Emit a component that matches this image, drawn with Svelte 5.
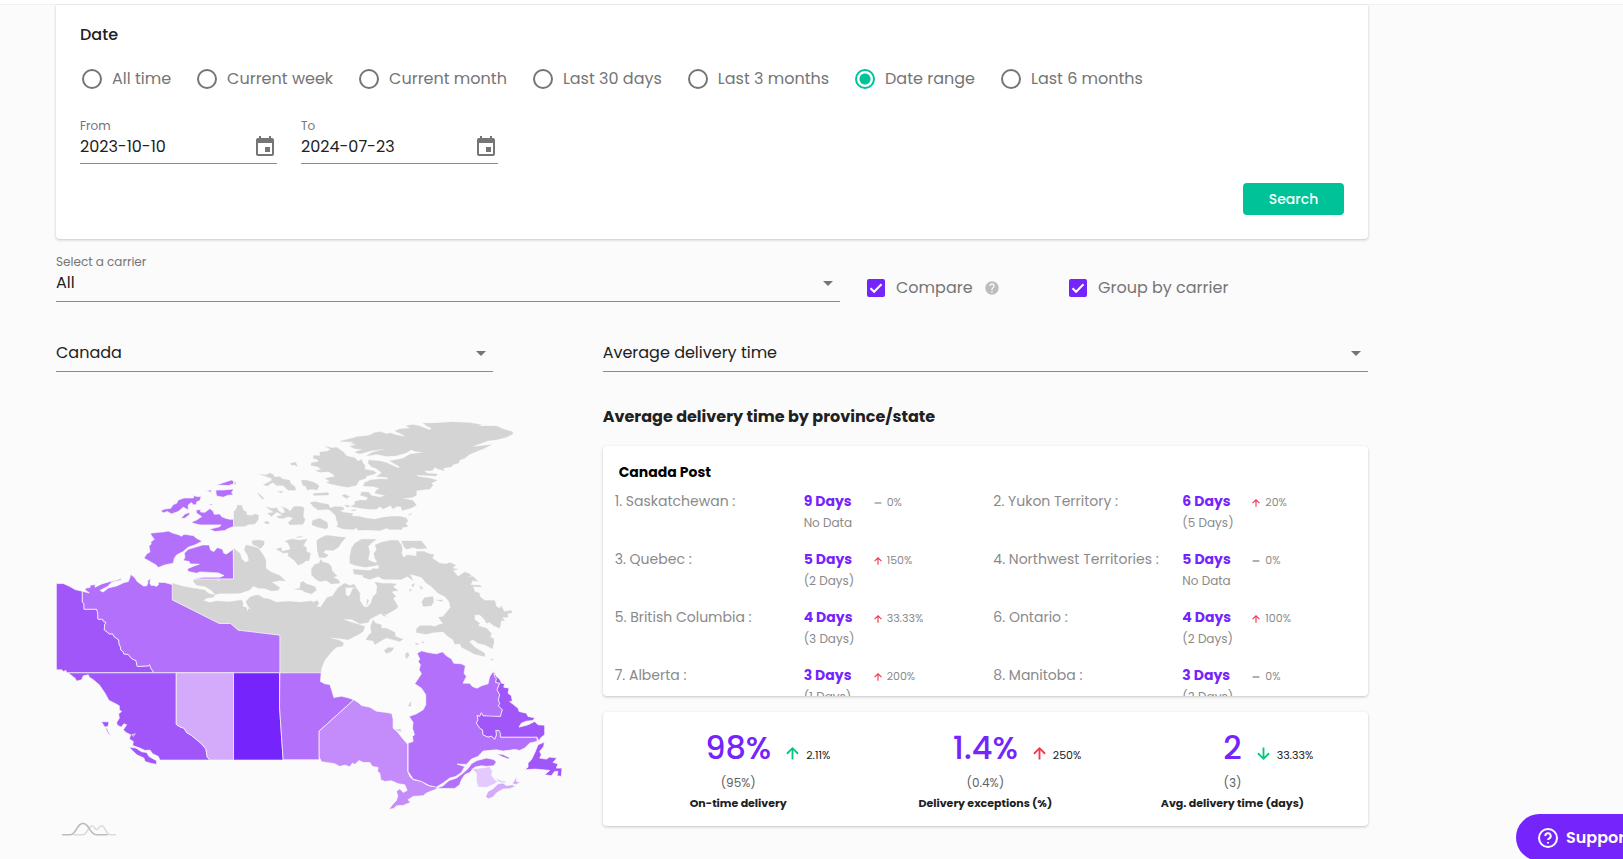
<script>
  const ranges = ['All time', 'Current week', 'Current month', 'Last 30 days', 'Last 3 months', 'Date range', 'Last 6 months'];
  let range = $state('Date range');
  let from = $state('2023-10-10');
  let to = $state('2024-07-23');
  let compare = $state(true);
  let grouped = $state(true);

  const dates = [
    { id: 'from', label: 'From' },
    { id: 'to', label: 'To' }
  ];

  const provinces = [
    ['1. Saskatchewan :', '9 Days', 'No Data', 'flat', '0%'],
    ['2. Yukon Territory :', '6 Days', '(5 Days)', 'up', '20%'],
    ['3. Quebec :', '5 Days', '(2 Days)', 'up', '150%'],
    ['4. Northwest Territories :', '5 Days', 'No Data', 'flat', '0%'],
    ['5. British Columbia :', '4 Days', '(3 Days)', 'up', '33.33%'],
    ['6. Ontario :', '4 Days', '(2 Days)', 'up', '100%'],
    ['7. Alberta :', '3 Days', '(1 Days)', 'up', '200%'],
    ['8. Manitoba :', '3 Days', '(3 Days)', 'flat', '0%']
  ];

  const totals = [
    { value: '98%', prev: '(95%)', label: 'On-time delivery', change: '2.11%', dir: 'up', tone: 'good' },
    { value: '1.4%', prev: '(0.4%)', label: 'Delivery exceptions (%)', change: '250%', dir: 'up', tone: 'bad' },
    { value: '2', prev: '(3)', label: 'Avg. delivery time (days)', change: '33.33%', dir: 'down', tone: 'good' }
  ];
</script>

{#snippet arrow(dir)}
  <svg class="arrow" viewBox="0 0 14 14" aria-hidden="true">
    {#if dir === 'flat'}
      <path d="M1 7h12" />
    {:else if dir === 'up'}
      <path d="M7 13.5V1.5M1 7.3 7 1.3l6 6" />
    {:else}
      <path d="M7 .5v12M1 6.7l6 6 6-6" />
    {/if}
  </svg>
{/snippet}

<div class="topbar"></div>
<main>
  <section class="card filter">
    <h2>Date</h2>
    <div class="radios">
      {#each ranges as r}
        <label class="radio"><input type="radio" name="range" value={r} bind:group={range} />{r}</label>
      {/each}
    </div>
    <div class="dates">
      {#each dates as d}
        <div class="field">
          <label for={d.id}>{d.label}</label>
          <div class="line">
            {#if d.id === 'from'}
              <input id="from" type="text" bind:value={from} />
            {:else}
              <input id="to" type="text" bind:value={to} />
            {/if}
            <button class="cal" type="button" aria-label="Open calendar">
              <svg viewBox="0 0 24 24"><path d="M17 12h-5v5h5v-5zM16 1v2H8V1H6v2H5c-1.11 0-1.99.9-1.99 2L3 19c0 1.1.89 2 2 2h14c1.1 0 2-.9 2-2V5c0-1.1-.9-2-2-2h-1V1h-2zm3 18H5V8h14v11z" /></svg>
            </button>
          </div>
        </div>
      {/each}
    </div>
    <div class="actions"><button class="search" type="button">Search</button></div>
  </section>

  <section class="carrier">
    <div class="field">
      <label for="carrier">Select a carrier</label>
      <div class="pick"><select id="carrier"><option>All</option></select></div>
    </div>
    <div class="check">
      <label><input type="checkbox" bind:checked={compare} />Compare</label>
      <svg class="help" viewBox="0 0 24 24" aria-hidden="true"><path d="M12 2C6.48 2 2 6.48 2 12s4.480 10 10 10 10-4.480 10-10S17.520 2 12 2zm1 17h-2v-2h2v2zm2.070-7.750l-.9.920C13.450 12.900 13 13.500 13 15h-2v-.5c0-1.100.450-2.100 1.170-2.830l1.240-1.260c.370-.360.590-.860.590-1.410 0-1.100-.9-2-2-2s-2 .9-2 2H8c0-2.210 1.790-4 4-4s4 1.790 4 4c0 .880-.360 1.680-.930 2.250z" /></svg>
    </div>
    <div class="check">
      <label><input type="checkbox" bind:checked={grouped} />Group by carrier</label>
    </div>
  </section>

  <div class="columns">
    <section>
      <div class="pick country"><select aria-label="Country"><option>Canada</option></select></div>
      <svg class="map" viewBox="18 0 1641 1290" role="img" aria-label="Canada">
        <g class="empty">
          <path d="M367 520 395 528 430 535 465 540 475 550 495 555 490 562 470 565 460 572 480 578 500 573 540 576 575 570 580 580 578 590 590 593 592 606 595 597 602 600 592 585 588 575 600 562 612 557 625 555 640 564 660 568 680 577 715 574 750 577 785 573 790 577 802 572 808 580 800 589 812 592 832 562 848 558 860 540 865 533 885 520 900 527 912 523 920 533 887 533 888 555 898 560 910 535 920 535 930 550 930 572 942 590 955 594 970 605 985 590 1000 608 975 620 960 628 955 638 930 642 905 628 878 628 900 636 925 643 945 650 940 665 930 672 918 678 895 690 870 686 835 683 870 692 882 700 878 709 860 712 845 726 824 752 814 778 814 789 690 789 690 676 565 661 542 641 508 641 367 570Z" />
          <path d="M552 415 562 424 570 430 576 448 588 458 597 452 593 435 583 420 588 405 610 410 626 415 640 435 648 450 648 475 665 487 690 497 707 513 690 512 665 517 690 533 685 541 665 543 645 536 625 535 610 528 600 540 570 550 540 551 512 551 495 554 487 543 465 530 440 526 430 515 432 508 552 508ZM606 393 625 390 643 393 643 404 632 416 622 410 608 403ZM552 305 560 296 562 286 575 286 580 300 590 306 590 315 607 317 613 312 626 315 625 330 615 342 595 344 585 349 552 350ZM552 215 560 219 554 225Z" />
          <g transform="translate(570 0)">
            <path d="M300 94 340 84 352 80 375 78 392 75 403 68 420 65 440 71 452 69 470 75 497 80 485 72 465 63 480 57 512 54 498 47 520 44 540 48 556 55 570 60 575 55 562 48 550 40 590 39 635 36 690 38 725 44 715 48 770 48 790 57 818 65 820 71 800 82 770 89 745 92 695 110 720 108 755 104 735 115 715 122 690 133 675 145 660 150 657 159 640 164 635 170 610 175 614 182 595 177 585 172 577 182 553 182 562 190 592 192 590 198 530 195 535 200 570 205 592 211 575 220 580 226 570 237 530 242 530 256 517 263 487 265 520 272 530 286 515 294 487 302 483 290 470 290 460 297 452 287 430 297 420 290 410 298 390 298 360 294 333 290 345 283 345 275 362 270 378 272 385 263 362 256 365 246 387 247 395 257 420 262 437 257 405 250 410 240 420 235 400 230 370 228 375 218 392 210 420 207 447 208 440 202 410 200 426 188 408 175 395 170 385 160 387 150 420 153 440 158 475 174 480 170 450 153 470 149 490 145 510 133 552 127 525 124 515 119 500 128 470 137 440 139 410 133 380 138 395 128 415 122 440 116 415 119 390 123 360 132 345 126 370 118 345 116 330 108 350 104 333 100 345 96Z" />
            <path d="M256 109 278 114 290 112 310 125 320 138 345 143 355 154 365 148 370 160 375 165 375 178 400 182 410 188 400 194 380 198 378 205 358 212 350 226 325 232 300 228 272 222 260 218 270 214 256 205 285 200 280 193 265 185 240 187 228 182 245 178 233 170 213 166 215 158 235 155 235 149 220 145 222 136 240 138 240 126 262 124 272 118Z" />
            <path d="M211 278 225 275 250 281 265 283 272 294 285 290 310 291 312 300 300 300 310 307 340 311 335 318 360 320 380 325 405 328 430 322 450 320 480 319 500 324 505 334 497 340 505 350 487 353 487 359 450 359 440 355 420 362 380 360 355 361 350 354 340 359 310 357 290 350 295 342 290 330 288 318 275 305 265 298 235 300 220 290ZM216 345 218 332 240 325 262 337 265 352 258 357 235 352ZM78 291 97 296 110 293 115 302 125 310 135 308 132 297 125 290 145 298 150 305 162 290 185 290 193 294 190 320 196 328 190 343 150 345 145 338 160 325 145 320 130 326 118 325 110 320 128 315 110 306 95 320 83 310 102 307ZM60 193 78 195 90 189 100 194 105 202 120 200 128 207 150 211 152 220 165 230 168 241 145 241 130 227 110 227 100 218 90 222 85 228 70 225 95 212 95 205ZM185 210 200 211 215 215 232 222 238 229 232 240 215 238 202 240 198 230 188 225ZM220 251 265 248 267 255 222 257ZM152 160 168 157 173 170 165 165 155 165ZM52 249 62 255 74 268 65 266ZM306 257 315 253 329 260 320 266ZM113 245 130 244 125 249ZM72 338 80 333 89 338 84 343ZM506 315 516 309 512 315ZM314 285 330 287 325 293ZM333 300 350 299 342 303Z" />
            <path d="M109 417 125 413 125 425 152 418 145 400 135 394 155 387 180 391 202 387 195 399 190 406 200 413 200 425 212 430 208 452 197 453 190 460 175 466 162 450 145 438 145 428 130 430ZM168 382 190 378 180 383ZM231 392 240 385 260 376 290 380 318 383 308 394 295 413 280 422 258 420 250 428 265 435 258 443 238 443 232 420ZM215 476 225 463 238 460 242 448 250 457 265 460 275 470 277 483 292 498 280 502 297 510 300 520 275 522 260 512 240 515 228 508 215 495ZM164 538 180 535 182 518 190 514 200 522 225 530 230 540 215 552 195 546 185 540ZM330 440 335 415 345 400 365 388 410 388 395 399 385 410 390 425 385 450 402 457 410 467 375 472 345 466 330 460Z" />
            <path d="M406 405 425 397 455 391 475 392 485 405 488 418 485 430 492 443 502 435 530 438 530 425 553 425 570 432 583 434 578 445 600 460 620 462 630 458 648 465 638 475 655 478 640 482 655 500 675 486 690 492 695 498 680 502 700 500 715 515 698 512 693 525 720 526 726 531 700 530 705 545 720 550 720 560 735 572 765 572 770 590 780 595 785 588 793 605 815 602 817 608 803 612 805 622 787 622 795 633 785 632 780 655 760 647 750 637 740 640 735 630 720 615 705 615 705 630 720 640 715 648 740 655 755 670 752 683 762 686 763 698 758 717 735 705 715 700 700 690 688 694 705 712 735 730 735 740 705 733 680 720 665 712 660 702 645 703 640 690 625 680 610 666 580 668 560 673 530 668 530 657 540 648 570 647 585 650 600 643 610 642 596 622 610 620 632 593 628 575 615 560 595 550 575 530 560 520 545 502 510 492 520 512 502 500 485 509 430 508 415 500 390 509 370 502 370 496 342 492 340 478 368 480 390 482 400 476 415 477 418 468 402 460 412 455 405 445 402 430 410 420ZM485 393 545 393 562 415 535 417 520 413 500 418 492 410Z" />
            <path d="M405 516 430 521 450 520 470 522 460 531 475 542 455 545 468 560 460 565 475 590 470 597 440 614 425 610 400 605 382 612 370 604 392 582 400 560 410 550 412 530ZM382 567 387 572 380 588ZM383 613 400 618 390 622ZM418 600 440 620 430 618ZM400 630 408 640 425 645 425 655 440 655 465 667 468 680 490 688 480 695 460 690 440 684 420 695 405 705 400 693 378 690 385 678 395 668 392 650ZM546 575 555 563 580 560 582 575 575 588 550 590ZM590 570 610 570 605 575ZM433 722 445 713 463 714 455 725 440 731ZM497 732 503 727 509 735 502 746 497 742ZM525 700 538 701 532 706ZM545 697 554 694 550 700ZM515 525 525 520 520 532ZM540 527 550 535 543 538ZM508 540 516 538 512 545ZM752 748 762 748 758 752Z" />
          </g>
          <path d="M1075 888 1084 875 1083 890ZM1035 960 1052 958 1054 966Z" />
        </g>
        <g transform="translate(0 480)">
          <path class="s4" d="M19 41 40 41 60 50 75 59 97 64 97 96 102 102 102 118 140 118 143 128 144 148 158 148 160 154 168 157 164 165 163 180 178 192 188 192 192 200 206 210 208 225 212 232 212 240 220 246 221 252 235 254 246 267 258 272 262 290 295 288 299 284 302 294 312 309 50 309 48 302 40 305 35 300 19 300Z" />
          <path class="s3" d="M97 64 118 69 105 60 108 54 120 53 120 46 136 44 135 52 155 42 180 35 200 31 215 25 212 31 185 37 173 50 150 62 160 66 175 54 200 48 222 38 235 35 240 22 242 13 255 24 262 35 280 48 290 48 294 38 292 34 302 25 300 40 304 47 312 46 318 50 325 45 325 37 345 38 367 44 367 90 508 161 542 161 565 181 690 196 690 309 312 309 302 294 299 284 295 288 262 290 258 272 246 267 235 254 221 252 220 246 212 240 212 232 208 225 206 210 192 200 188 192 178 192 163 180 164 165 168 157 160 154 158 148 144 148 143 128 140 118 102 118 102 102 97 96Z" />
          <path class="s4" d="M54 309 379 309 379 464 392 472 402 475 410 488 425 497 438 508 455 522 468 538 472 562 480 571 330 571 325 560 308 552 300 541 285 542 270 535 248 527 250 515 238 508 242 495 228 488 220 480 230 465 222 462 214 472 202 466 200 458 208 445 206 432 215 425 208 420 208 408 190 398 177 392 165 370 148 345 130 330 118 322 115 315 100 318 95 330 80 334 75 325ZM237 532 258 535 275 546 290 548 297 560 320 573 320 584 300 580 285 575 282 565 262 556 250 545ZM154 456 177 456 174 470 165 472ZM165 473 172 478 176 488 186 499 175 492ZM245 495 256 492 250 500Z" />
          <path class="s1" d="M379 309H551V571H480L472 562 468 538 455 522 438 508 425 497 410 488 402 475 392 472 379 464Z" />
          <path class="s5" d="M551 309H689V410L695 500 700 571H551Z" />
        </g>
        <path class="s3" d="M301 370 325 367 340 366 355 363 370 370 385 374 395 379 402 373 430 377 440 385 457 394 435 405 415 412 400 425 380 435 373 446 370 460 345 465 325 473 318 465 300 455 282 445 290 432 300 426 297 408 304 402 302 397 313 388 305 378ZM403 430 415 418 435 412 458 405 478 405 482 420 492 425 502 413 518 418 522 430 530 432 550 418 551 507 430 507 460 502 510 502 522 497 505 489 450 486 440 490 415 485 412 477 432 468 448 463 420 462 418 455 400 452 405 442ZM424 337 440 330 455 320 440 310 438 300 453 299 452 306 465 307 480 296 490 304 493 313 510 312 515 320 527 325 540 328 551 328 551 350 535 356 525 362 495 365 478 358 510 350 513 345 485 345 450 345 430 340ZM333 302 345 297 362 295 370 284 380 280 385 270 402 264 430 264 432 257 442 260 454 260 450 272 440 276 440 284 430 285 425 278 415 285 415 300 400 292 385 305 365 312 352 305 340 309ZM393 325 405 312 420 307 418 315 405 325ZM498 240 520 240 552 237 545 248 550 255 535 256 520 262 500 258 498 248ZM500 225 530 215 545 210 551 213 551 222 535 227ZM468 242 486 240 482 247ZM474 283 490 282 485 286ZM503 508 508 508 506 514Z" />
        <g transform="translate(660 570)">
          <path class="s3" d="M30 219H154L152 245 165 252 180 254 187 275 192 293 215 289 235 294 252 300 148 394V480H40L35 410 29 320Z" />
          <path class="s2" d="M252 300 265 308 275 317 300 322 320 334 350 338 366 341 370 358 370 385 385 398 395 412 414 434V515L420 530 430 540 455 545 470 555 485 560 505 556 500 568 470 580 460 588 430 590 415 600 422 608 400 617 380 618 372 626 357 629 368 615 380 602 384 588 380 575 390 567 400 578 412 572 405 555 385 552 365 543 345 545 333 540 330 520 323 515 325 503 308 500 300 488 280 488 268 482 255 494 248 490 240 501 225 496 210 500 195 492 170 488 155 486 148 472V394Z" />
          <path class="s3" d="M442 160 455 153 475 158 500 162 518 156 530 168 545 177 552 190 575 192 587 198 583 220 590 230 580 250 600 250 608 260 622 265 635 258 655 252 660 230 672 213 675 230 680 236 678 248 690 250 682 270 690 285 686 300 690 312 686 318 698 330 692 350 660 350 640 348 635 339 630 350 622 347 625 360 620 370 630 385 638 390 640 405 655 412 665 409 675 418 680 405 678 392 692 393 692 412 802 412V425L780 430 765 445 750 452 735 449 700 454 680 450 640 454 625 470 605 478 590 494 562 493 585 500 575 518 558 530 540 535 520 550 500 562 480 558 455 545 430 538 415 515V430L430 425 428 410 434 405 428 385 430 368 418 350 440 342 460 330 468 315 468 285 455 265 435 252 445 237 455 222 448 210 452 195 445 185 450 178Z" />
          <path class="s3" d="M500 566 520 558 538 542 560 535 580 520 595 506 605 492 622 482 650 475 672 479 680 487 672 498 650 500 635 498 615 502 600 518 585 525 575 540 570 555 555 566ZM680 462 700 464 722 475 715 478 695 470Z" />
          <path class="s4" d="M672 213 680 230 690 238 695 250 705 252 702 262 718 265 715 280 725 288 728 305 720 305 732 315 745 325 748 335 770 340 775 350 795 354 790 362 770 364 755 370 748 382 775 375 795 365 805 375 825 376 825 405 812 415 808 425 802 412 692 412 692 400 688 392 678 392 680 405 675 418 665 409 655 412 640 405 638 390 630 385 620 370 625 360 622 347 630 350 635 339 640 348 692 350 698 330 686 318 690 312 686 300 690 285 682 270 690 250 678 248 680 236 675 230ZM765 510 775 502 775 490 785 480 795 460 805 435 824 427 822 440 810 455 815 465 810 475 830 478 840 472 862 475 850 488 865 492 860 505 877 505 875 530 862 528 865 515 855 515 845 528 825 525 840 512 820 510 795 508Z" />
          <path class="s0" d="M606 508 640 504 660 500 668 515 665 525 675 540 685 545 670 555 650 563 625 562 620 545 620 520ZM675 535 695 542 712 545 705 550 690 548Z" />
          <path class="s1" d="M648 590 655 575 670 567 685 552 700 550 710 557 728 555 738 560 720 567 700 568 680 580 670 592 655 598ZM728 552 735 540 742 530 740 545 752 545 740 555Z" />
        </g>
        <g class="waves" transform="translate(0 480)">
          <path class="pale" d="M70 795H98C112 795 114 768 127 768 134 768 134 780 140 780 146 780 146 768 154 768 166 768 168 795 180 795H198" />
          <path d="M36 795H62C78 795 80 761 99 761 118 761 120 795 138 795H173" />
        </g>
      </svg>
    </section>

    <section>
      <div class="pick"><select aria-label="Metric"><option>Average delivery time</option></select></div>
      <h1>Average delivery time by province/state</h1>
      <div class="card list">
        <h3>Canada Post</h3>
        <div class="provinces">
          {#each provinces as [name, days, prev, dir, pct]}
            <div class="province">
              <span class="name">{name}</span>
              <div class="days"><strong>{days}</strong><small>{prev}</small></div>
              <span class="change {dir}">{@render arrow(dir)}{pct}</span>
            </div>
          {/each}
        </div>
      </div>
      <div class="card totals">
        {#each totals as t}
          <div class="total">
            <div class="figure">
              <b>{t.value}</b>
              <span class="delta {t.tone}">{@render arrow(t.dir)}{t.change}</span>
            </div>
            <span class="prev">{t.prev}</span>
            <span class="caption">{t.label}</span>
          </div>
        {/each}
      </div>
    </section>
  </div>
</main>
<button class="support" type="button">
  <svg viewBox="0 0 20 20" aria-hidden="true"><circle cx="10" cy="10" r="9" /><path d="M7.300 8a2.700 2.700 0 1 1 4 2.300C10.300 10.900 10 11.200 10 12" /><path d="M10 14v1.600" /></svg>
  Support
</button>

<style>
  :global(body) {
    background: #fbfbfb;
    color: #212121;
    font-family: Poppins, Inter, sans-serif;
    font-size: 16px;
    line-height: 24px;
    overflow: hidden;
  }
  main, main * { box-sizing: border-box; }
  input, select, button { font: inherit; color: inherit; }
  h1, h2, h3 { margin: 0; }
  .topbar { height: 4px; background: #fff; border-bottom: 1px solid #f0f0f0; }
  main { max-width: 1312px; margin-left: 56px; }
  .card { background: #fff; border-radius: 4px; box-shadow: 0 1px 3px rgba(0, 0, 0, .22); }
  .filter { padding: 18px 24px 24px; border-radius: 0 0 4px 4px; }
  h2 { font-size: 16px; font-weight: 500; }
  .radios { display: flex; gap: 24px; margin-top: 20px; color: #757575; }
  .radio { display: flex; align-items: center; gap: 10px; padding-left: 2px; white-space: nowrap; }
  .radio input {
    appearance: none; width: 20px; height: 20px; margin: 0;
    border: 2px solid #757575; border-radius: 50%;
  }
  .radio input:checked { border-color: #00c298; background: radial-gradient(circle, #00c298 5px, #fff 6px); }
  .dates { display: flex; gap: 24px; margin-top: 26px; }
  .dates .field { width: 197px; }
  .field label { display: block; font-size: 12px; line-height: 18px; color: #757575; }
  .line { display: flex; align-items: center; height: 29px; border-bottom: 1px solid #8a8a8a; }
  .line input { flex: 1; min-width: 0; border: 0; padding: 0; height: 24px; margin-bottom: 4px; background: none; outline: 0; }
  .cal { width: 24px; height: 24px; padding: 0; border: 0; margin-bottom: 4px; background: none; }
  .cal svg { display: block; fill: #757575; }
  .actions { display: flex; justify-content: flex-end; margin-top: 19px; }
  .search { width: 101px; height: 32px; padding: 0; border: 0; border-radius: 4px; background: #00c298; color: #fff; font-size: 14px; font-weight: 500; }
  .carrier { display: grid; grid-template-columns: 784px 175px auto; column-gap: 27px; margin-top: 14px; align-items: end; }
  .pick { position: relative; height: 31px; border-bottom: 1px solid #8a8a8a; }
  .pick::after {
    content: ''; position: absolute; right: 7px; top: 10px;
    border: 5px solid transparent; border-top-color: #757575; border-bottom: 0;
  }
  select { appearance: none; width: 100%; height: 24px; border: 0; padding: 0; background: none; outline: 0; display: block; }
  .check { display: flex; align-items: center; gap: 11px; height: 24px; margin-bottom: 2px; color: #757575; }
  .check label { display: flex; align-items: center; gap: 11px; white-space: nowrap; }
  .check input {
    appearance: none; width: 18px; height: 18px; margin: 0; border-radius: 2px; border: 2px solid #757575;
  }
  .check input:checked {
    border: 0;
    background: #7524fb url("data:image/svg+xml,%3Csvg xmlns='http://www.w3.org/2000/svg' viewBox='0 0 18 18'%3E%3Cpath d='M3.500 9.200l3.600 3.600 7.400-7.600' fill='none' stroke='white' stroke-width='2'/%3E%3C/svg%3E");
  }
  .help { width: 16px; height: 16px; fill: #bdbdbd; }
  .columns { display: grid; grid-template-columns: 5fr 7fr; margin-top: 39px; }
  .country { width: 80%; }
  .map { display: block; width: 100%; margin-top: 38px; }
  .map path { stroke: #fbfbfb; stroke-width: 3; stroke-opacity: .7; stroke-linejoin: round; }
  .map .empty path { fill: #d4d4d4; stroke: #d4d4d4; stroke-width: 1; }
  .s0 { fill: #e3c9fd; }
  .s1 { fill: #d3abfa; }
  .s2 { fill: #c48cfa; }
  .s3 { fill: #b370fb; }
  .s4 { fill: #a156f9; }
  .s5 { fill: #7524fb; }
  .map .waves path { fill: none; stroke: #bdbdbd; stroke-width: 5; stroke-opacity: 1; }
  .map .waves .pale { stroke: #dcdcdc; }
  h1 { margin-top: 33px; font-size: 16px; font-weight: 700; line-height: 24px; }
  .list { height: 250px; margin-top: 17px; padding: 14px 12px 0; overflow: hidden; }
  h3 { padding-left: 4px; font-size: 14px; font-weight: 700; line-height: 24px; color: #000; }
  .provinces { display: grid; grid-template-columns: 1fr 1fr; row-gap: 16px; column-gap: 16px; margin-top: 7px; }
  .province { display: grid; grid-template-columns: 189px 70px auto; line-height: 21px; color: #8a8a8a; }
  .name { font-size: 14px; font-weight: 400; white-space: nowrap; }
  .days strong { display: block; font-size: 14px; font-weight: 700; color: #7524fb; }
  .days small { display: block; font-size: 12px; }
  .change { display: flex; align-items: center; gap: 5px; height: 23px; font-size: 11px; }
  .arrow { width: 8px; height: 8px; fill: none; stroke: currentColor; stroke-width: 2; overflow: visible; }
  .change .arrow { color: #f0384f; }
  .change.flat .arrow { color: #757575; }
  .totals { display: grid; grid-template-columns: repeat(3, 1fr); margin-top: 16px; padding: 12px; }
  .total { display: flex; flex-direction: column; text-align: center; }
  .figure { display: grid; grid-template-columns: 1fr auto 1fr; height: 49px; line-height: 48px; }
  .figure b { grid-column: 2; font-size: 32px; font-weight: 500; color: #7524fb; }
  .delta { display: flex; align-items: center; gap: 7px; padding: 19px 0 0 15px; font-size: 11px; line-height: 24px; height: 43px; }
  .delta .arrow { width: 13px; height: 13px; margin-bottom: 3px; }
  .good .arrow { color: #05c77e; }
  .bad .arrow { color: #f0384f; }
  .prev { font-size: 12px; line-height: 20px; color: #616161; }
  .caption { font-size: 11px; font-weight: 700; line-height: 21px; }
  .support {
    position: fixed; right: -24px; bottom: -2px; display: flex; align-items: center; gap: 8px;
    width: 131px; height: 47px; box-sizing: border-box; padding: 0 0 0 22px; border: 0; border-radius: 24px;
    background: #7524fb; color: #fff; font-weight: 600; white-space: nowrap;
  }
  .support svg { flex: none; width: 20px; height: 20px; fill: none; stroke: #fff; stroke-width: 2; }
</style>
